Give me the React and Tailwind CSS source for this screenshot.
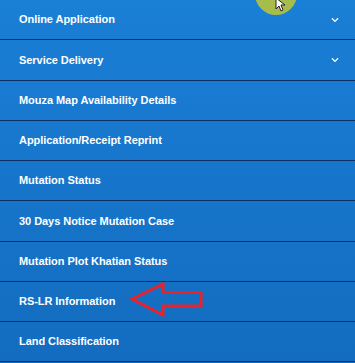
import { FaChevronDown } from "react-icons/fa"

const items = [
    { label: "Online Application", drop: true },
    { label: "Service Delivery", drop: true },
    { label: "Mouza Map Availability Details" },
    { label: "Application/Receipt Reprint" },
    { label: "Mutation Status" },
    { label: "30 Days Notice Mutation Case" },
    { label: "Mutation Plot Khatian Status" },
    { label: "RS-LR Information", arrow: true },
    { label: "Land Classification" },
]

function App()
{
    return(
        <div className="relative w-[355px] h-[363px] overflow-hidden bg-gradient-to-b from-[#1a7fd6] to-[#136cbf] font-['Liberation_Sans',Arial,sans-serif]">
            {
                items.map((item, index) =>
                {
                    return(<div key={index} className="relative flex items-center justify-between h-[40.25px] pl-[19px] pr-[16px] border-b-[1.5px] border-[#0c2f66] last:border-b-0">
                        <span className="text-white font-bold text-[11px] tracking-[-0.05px]">{item.label}</span>
                        {item.drop && <FaChevronDown className="text-white w-[8px] h-[8px]" />}
                        {item.arrow && (
                            <svg className="absolute left-[128px] top-[-1px]" width="78" height="36" viewBox="0 0 78 36">
                                <path d="M4 18 L35 3 L35 11.5 L73 11.5 L73 25 L35 25 L35 34 Z" fill="none" stroke="#e8232b" strokeWidth="3" strokeLinejoin="miter" />
                            </svg>
                        )}
                    </div>)
                })
            }
            <div className="absolute left-[255px] top-[-27px] w-[42px] h-[42px] rounded-full bg-[#b7c43c] opacity-90"></div>
            <svg className="absolute left-[275px] top-[-3px]" width="12" height="16" viewBox="0 0 12 16">
                <path d="M1 1 L1 12 L4 9 L6 14 L8 13 L6 8 L10 8 Z" fill="#ffffff" stroke="#222" strokeWidth="1" />
            </svg>
        </div>
    )
}

export default App
